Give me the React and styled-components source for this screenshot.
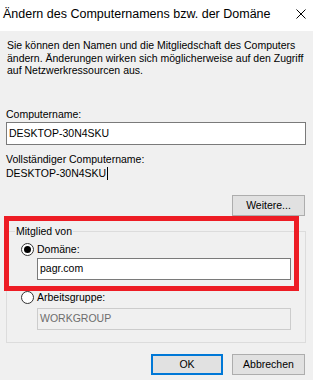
import React from "react";
import styled, { createGlobalStyle } from "styled-components";

const GlobalStyle = createGlobalStyle`
  html, body { margin: 0; padding: 0; background: #f0f0f0; }
  body { font-family: "Liberation Sans", Arial, sans-serif; font-size: 10.5px; color: #000; }
  * { box-sizing: border-box; }
`;

const Window = styled.div`
  position: relative;
  width: 313px;
  height: 380px;
  background: #f0f0f0;
  display: flex;
  flex-direction: column;
  overflow: hidden;
`;

const TitleBar = styled.div`
  height: 31px;
  background: #fff;
  display: flex;
  align-items: center;
  justify-content: space-between;
  padding: 0 7px 0 3px;
  flex-shrink: 0;
`;

const Title = styled.div`
  font-size: 12.5px;
  line-height: 16px;
  margin-top: -3px;
`;

const CloseIcon = () => (
  <svg width="10" height="10" viewBox="0 0 10 10" style={{ marginTop: -3 }}>
    <path d="M0.5 0.5 L9.5 9.5 M9.5 0.5 L0.5 9.5" stroke="#000" strokeWidth="1" fill="none" />
  </svg>
);

const Content = styled.div`
  padding: 8px 7px 0 6px;
  display: flex;
  flex-direction: column;
  line-height: 13px;
`;

const Description = styled.p`
  margin: 0 0 0 1px;
  line-height: 12.5px;
`;

const Label = styled.div`
  margin-top: ${(p) => p.$mt || 0}px;
  line-height: 13px;
`;

const TextBox = styled.div`
  height: ${(p) => p.$h || 23}px;
  width: ${(p) => (p.$w ? p.$w + "px" : "100%")};
  margin-top: ${(p) => p.$mt || 0}px;
  margin-left: ${(p) => p.$ml || 0}px;
  border: 1px solid ${(p) => (p.$disabled ? "#cccccc" : "#7a7a7a")};
  background: ${(p) => (p.$disabled ? "#f0f0f0" : "#fff")};
  color: ${(p) => (p.$disabled ? "#6d6d6d" : "#000")};
  display: flex;
  align-items: center;
  padding-left: 2px;
`;

const Value = styled.div`
  margin-top: ${(p) => p.$mt || 0}px;
  display: flex;
  align-items: center;
`;

const Caret = styled.span`
  display: inline-block;
  width: 1px;
  height: 13px;
  background: #000;
  margin-left: 1px;
`;

const ButtonRow = styled.div`
  display: flex;
  justify-content: flex-end;
  gap: 9px;
  margin-top: ${(p) => p.$mt || 0}px;
  padding-right: 1px;
`;

const Button = styled.button`
  width: ${(p) => p.$w || 73}px;
  height: 21px;
  background: #e1e1e1;
  border: ${(p) => (p.$default ? "2px solid #0078d7" : "1px solid #adadad")};
  font-family: inherit;
  font-size: 10.5px;
  color: #000;
  padding: 0;
  margin: 0;
`;

const GroupBox = styled.fieldset`
  margin: 9px 0 0 0;
  padding: 2px 0 11px 14px;
  border: 1px solid #dcdcdc;
  height: 118px;
`;

const Legend = styled.legend`
  padding: 0 1px;
  margin-left: -6px;
  line-height: 13px;
`;

const RadioRow = styled.label`
  display: flex;
  align-items: center;
  gap: 3px;
  margin-top: ${(p) => p.$mt || 0}px;
  line-height: 13px;
`;

const RadioCircle = styled.span`
  width: 13px;
  height: 13px;
  border-radius: 50%;
  border: 1px solid #333;
  background: #fff;
  display: flex;
  align-items: center;
  justify-content: center;
  &::after {
    content: "";
    width: 7px;
    height: 7px;
    border-radius: 50%;
    background: ${(p) => (p.$checked ? "#000" : "transparent")};
  }
`;

const Highlight = styled.div`
  position: absolute;
  left: 4px;
  top: 216px;
  width: 295px;
  height: 75px;
  border: 5px solid #ed1c24;
  pointer-events: none;
`;

export default function App() {
  return (
    <>
      <GlobalStyle />
      <Window>
        <TitleBar>
          <Title>Ändern des Computernamens bzw. der Domäne</Title>
          <CloseIcon />
        </TitleBar>
        <Content>
          <Description>
            Sie können den Namen und die Mitgliedschaft des Computers ändern. Änderungen wirken sich möglicherweise auf den Zugriff auf Netzwerkressourcen aus.
          </Description>
          <Label $mt={31}>Computername:</Label>
          <TextBox $mt={1}>DESKTOP-30N4SKU</TextBox>
          <Label $mt={8}>Vollständiger Computername:</Label>
          <Value $mt={1}>
            DESKTOP-30N4SKU
            <Caret />
          </Value>
          <ButtonRow $mt={15}>
            <Button $w={73}>Weitere...</Button>
          </ButtonRow>
          <GroupBox>
            <Legend>Mitglied von</Legend>
            <RadioRow $mt={3}>
              <RadioCircle $checked />
              Domäne:
            </RadioRow>
            <TextBox $w={254} $h={22} $mt={2} $ml={16}>pagr.com</TextBox>
            <RadioRow $mt={11}>
              <RadioCircle />
              Arbeitsgruppe:
            </RadioRow>
            <TextBox $w={254} $h={22} $mt={4} $ml={16} $disabled>WORKGROUP</TextBox>
          </GroupBox>
          <ButtonRow $mt={11}>
            <Button $default $w={72}>OK</Button>
            <Button $w={73}>Abbrechen</Button>
          </ButtonRow>
        </Content>
        <Highlight />
      </Window>
    </>
  );
}
